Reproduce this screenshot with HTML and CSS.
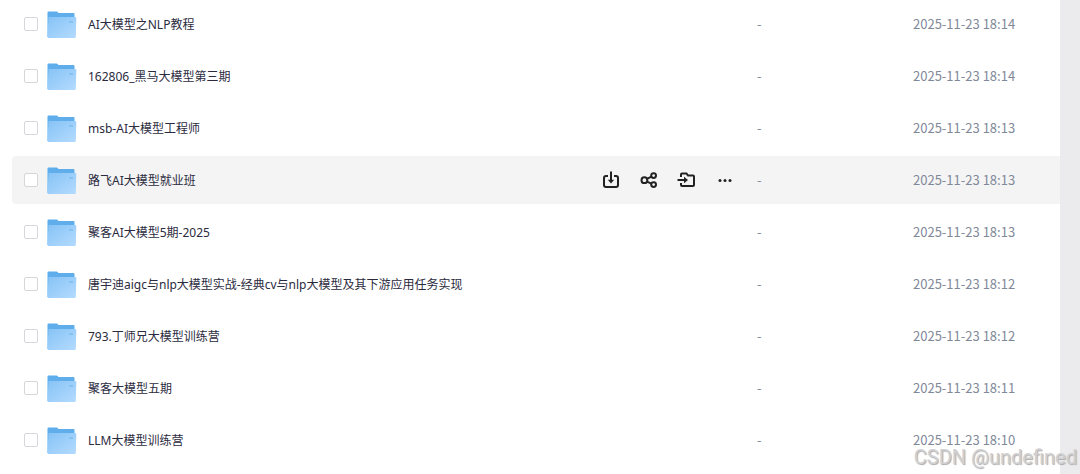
FILE: index.html
```html
<!DOCTYPE html>
<html lang="zh-CN">
<head>
  <meta charset="UTF-8" />
  <meta name="viewport" content="width=device-width, initial-scale=1.0"/>
  <title>全部文件</title>
  <link rel="stylesheet" href="styles.css">
</head>
<body>
  <svg width="0" height="0" class="defs" aria-hidden="true">
    <defs>
      <linearGradient id="front" x1="0" y1="0" x2="1" y2="1">
        <stop offset="0" stop-color="#86c3f5"/>
        <stop offset="1" stop-color="#b4dbff"/>
      </linearGradient>
      <symbol id="folder" viewBox="0 0 30 28">
        <path d="M0.5 1.5a1 1 0 0 1 1-1H9.6a1.5 1.5 0 0 1 1.1 .6l.7 .9H26.5a1 1 0 0 1 1 1V26H0.5z" fill="#5fadeb"/>
        <path d="M1.5 6H28.3a1 1 0 0 1 1 1L28.8 26a1 1 0 0 1-1 1H1.5a1 1 0 0 1-1-1z" fill="url(#front)"/>
        <rect x="22" y="10" width="4" height="2" fill="#86c1f3"/>
      </symbol>
    </defs>
  </svg>
  <main class="panel">
    <table class="file-list">
      <tbody>
        <tr>
          <td class="name"><div class="name-box"><input type="checkbox" id="f1"><svg class="folder"><use href="#folder"/></svg><label for="f1">AI大模型之NLP教程</label></div></td>
          <td class="size">-</td>
          <td class="time">2025-11-23 18:14</td>
        </tr>
        <tr>
          <td class="name"><div class="name-box"><input type="checkbox" id="f2"><svg class="folder"><use href="#folder"/></svg><label for="f2">162806_黑马大模型第三期</label></div></td>
          <td class="size">-</td>
          <td class="time">2025-11-23 18:14</td>
        </tr>
        <tr>
          <td class="name"><div class="name-box"><input type="checkbox" id="f3"><svg class="folder"><use href="#folder"/></svg><label for="f3">msb-AI大模型工程师</label></div></td>
          <td class="size">-</td>
          <td class="time">2025-11-23 18:13</td>
        </tr>
        <tr class="active">
          <td class="name">
            <div class="name-box">
              <input type="checkbox" id="f4"><svg class="folder"><use href="#folder"/></svg><label for="f4">路飞AI大模型就业班</label>
              <div class="actions">
                <button type="button" aria-label="下载">
                  <svg viewBox="0 0 20 20"><path d="M7 6H5a2 2 0 0 0-2 2v7a2 2 0 0 0 2 2h10a2 2 0 0 0 2-2V8a2 2 0 0 0-2-2h-2M10 1.5v10"/><path class="fill" d="M6.8 9.8h6.4L10 13.6z"/></svg>
                </button>
                <button type="button" aria-label="分享">
                  <svg viewBox="0 0 20 20"><circle cx="5.4" cy="10.2" r="2.9"/><circle cx="14.6" cy="5.6" r="2.4"/><circle cx="14.6" cy="14.6" r="2.4"/><path d="M8 8.9l4.4-2.2M8 11.6l4.4 2"/></svg>
                </button>
                <button type="button" aria-label="移动">
                  <svg viewBox="0 0 20 20"><path d="M4 7V4.5a1 1 0 0 1 1-1h4.5l1.5 2H16a1 1 0 0 1 1 1V15a1 1 0 0 1-1 1H5a1 1 0 0 1-1-1v-2M.5 10h8"/><path class="fill" d="M7 6.8v6.4l4-3.2z"/></svg>
                </button>
                <button type="button" aria-label="更多">
                  <svg viewBox="0 0 20 20"><g class="fill"><circle cx="5" cy="10.5" r="1.5"/><circle cx="10" cy="10.5" r="1.5"/><circle cx="15" cy="10.5" r="1.5"/></g></svg>
                </button>
              </div>
            </div>
          </td>
          <td class="size">-</td>
          <td class="time">2025-11-23 18:13</td>
        </tr>
        <tr>
          <td class="name"><div class="name-box"><input type="checkbox" id="f5"><svg class="folder"><use href="#folder"/></svg><label for="f5">聚客AI大模型5期-2025</label></div></td>
          <td class="size">-</td>
          <td class="time">2025-11-23 18:13</td>
        </tr>
        <tr>
          <td class="name"><div class="name-box"><input type="checkbox" id="f6"><svg class="folder"><use href="#folder"/></svg><label for="f6">唐宇迪aigc与nlp大模型实战-经典cv与nlp大模型及其下游应用任务实现</label></div></td>
          <td class="size">-</td>
          <td class="time">2025-11-23 18:12</td>
        </tr>
        <tr>
          <td class="name"><div class="name-box"><input type="checkbox" id="f7"><svg class="folder"><use href="#folder"/></svg><label for="f7">793.丁师兄大模型训练营</label></div></td>
          <td class="size">-</td>
          <td class="time">2025-11-23 18:12</td>
        </tr>
        <tr>
          <td class="name"><div class="name-box"><input type="checkbox" id="f8"><svg class="folder"><use href="#folder"/></svg><label for="f8">聚客大模型五期</label></div></td>
          <td class="size">-</td>
          <td class="time">2025-11-23 18:11</td>
        </tr>
        <tr>
          <td class="name"><div class="name-box"><input type="checkbox" id="f9"><svg class="folder"><use href="#folder"/></svg><label for="f9">LLM大模型训练营</label></div></td>
          <td class="size">-</td>
          <td class="time">2025-11-23 18:10</td>
        </tr>
      </tbody>
    </table>
  </main>
  <div class="watermark">CSDN @undefined</div>
</body>
</html>
```

FILE: styles.css
```css
* { margin: 0; padding: 0; box-sizing: border-box; }
body {
  font-family: "Noto Sans", "Noto Sans CJK SC", sans-serif;
  font-size: 12px;
  line-height: 20px;
  color: #03081a;
  background: #ebebed;
  min-height: 100vh;
  padding-right: 20px;
  display: flex;
  position: relative;
}
.defs { position: absolute; }
.panel {
  flex: 1;
  min-width: 0;
  background: #fff;
  padding-left: 12px;
}
.file-list {
  width: 100%;
  margin-top: -4px;
  table-layout: fixed;
  border-collapse: separate;
  border-spacing: 0 4px;
}
td { height: 48px; vertical-align: middle; }
.name { padding-left: 12px; border-radius: 4px 0 0 4px; }
.size, .time {
  font-family: "Noto Sans CJK SC", sans-serif;
  font-size: 13px;
  color: #818999;
}
.size { width: 156px; }
.time { width: 147px; }
.active td { background: #f4f4f4; }
.name-box { display: flex; align-items: center; }
.name-box label { color: #2b2b40; white-space: nowrap; padding-top: 2px; }
input[type="checkbox"] {
  appearance: none;
  width: 14px;
  height: 14px;
  border: 1px solid #d4d6d9;
  border-radius: 2px;
  background: #fff;
}
.folder { width: 30px; height: 28px; margin: 2px 11px 0 9px; }
.actions {
  display: flex;
  gap: 18px;
  margin-left: auto;
  padding-right: 22px;
}
.actions button {
  width: 20px;
  height: 20px;
  border: none;
  background: none;
  cursor: pointer;
}
.actions svg {
  display: block;
  width: 20px;
  height: 20px;
  fill: none;
  stroke: #222;
  stroke-width: 2;
}
.actions .fill { fill: #222; stroke: none; }
.watermark {
  position: absolute;
  right: 3px;
  bottom: 4px;
  font-family: Roboto, sans-serif;
  font-size: 20px;
  line-height: 26px;
  color: #d0d0d2;
  text-shadow: 1px 1px 1px #aaa;
  pointer-events: none;
}
```
